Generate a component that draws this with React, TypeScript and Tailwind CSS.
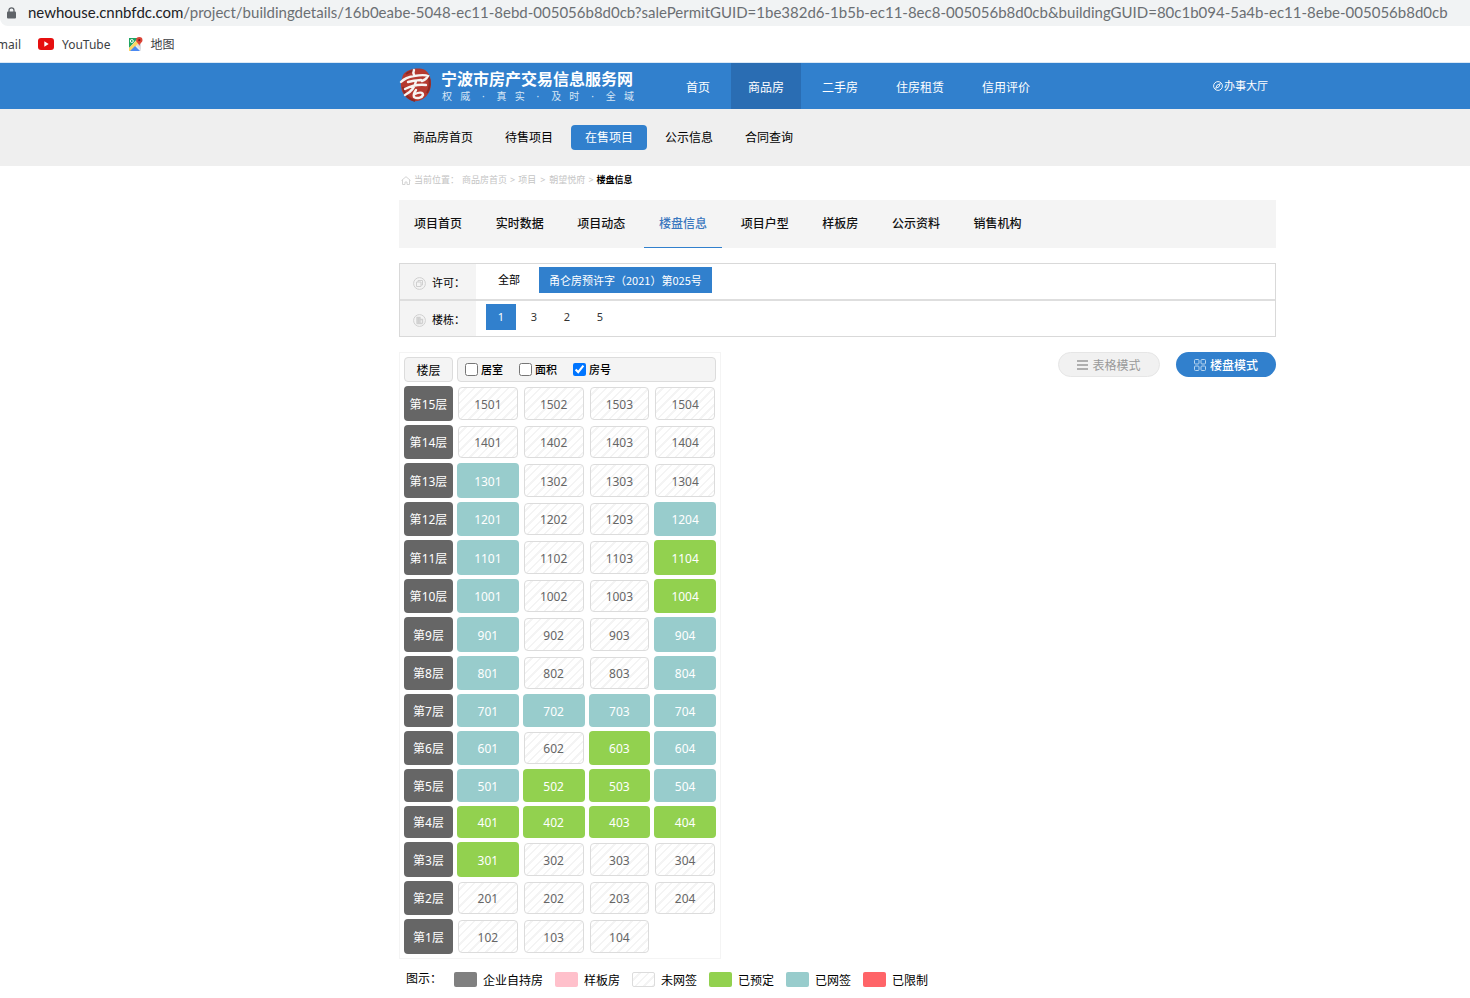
import React, { useState } from 'react';

type Status = 'open' | 'booked' | 'signed';

const shell = 'pl-[399px] pr-[194px]';
const hatch =
  'border border-[#dcdcdc] bg-[repeating-linear-gradient(135deg,#ffffff_0px,#ffffff_4px,#f4f4f4_4px,#f4f4f4_6px)]';

const mainNav = ['首页', '商品房', '二手房', '住房租赁', '信用评价'];
const subNav = ['商品房首页', '待售项目', '在售项目', '公示信息', '合同查询'];
const tabs = ['项目首页', '实时数据', '项目动态', '楼盘信息', '项目户型', '样板房', '公示资料', '销售机构'];

const statusClass: Record<Status, string> = {
  open: `${hatch} text-[#666]`,
  booked: 'bg-[#92d14f] text-white',
  signed: 'bg-[#98cccc] text-white',
};

const o: Status = 'open';
const b: Status = 'booked';
const s: Status = 'signed';

const floors: { floor: number; height: string; rooms: Status[]; first?: number }[] = [
  { floor: 15, height: 'h-[35px]', rooms: [o, o, o, o] },
  { floor: 14, height: 'h-[34px]', rooms: [o, o, o, o] },
  { floor: 13, height: 'h-[35px]', rooms: [s, o, o, o] },
  { floor: 12, height: 'h-[34px]', rooms: [s, o, o, s] },
  { floor: 11, height: 'h-[35px]', rooms: [s, o, o, b] },
  { floor: 10, height: 'h-[34px]', rooms: [s, o, o, b] },
  { floor: 9, height: 'h-[35px]', rooms: [s, o, o, s] },
  { floor: 8, height: 'h-[34px]', rooms: [s, o, o, s] },
  { floor: 7, height: 'h-[33px]', rooms: [s, s, s, s] },
  { floor: 6, height: 'h-[34px]', rooms: [s, o, b, s] },
  { floor: 5, height: 'h-[33px]', rooms: [s, b, b, s] },
  { floor: 4, height: 'h-[32px]', rooms: [b, b, b, b] },
  { floor: 3, height: 'h-[35px]', rooms: [b, o, o, o] },
  { floor: 2, height: 'h-[34px]', rooms: [o, o, o, o] },
  { floor: 1, height: 'h-[35px]', rooms: [o, o, o], first: 2 },
];

const legend = [
  { name: '企业自持房', swatch: 'bg-[#808080]' },
  { name: '样板房', swatch: 'bg-[#ffc0cb]' },
  { name: '未网签', swatch: hatch },
  { name: '已预定', swatch: 'bg-[#92d14f]' },
  { name: '已网签', swatch: 'bg-[#98cccc]' },
  { name: '已限制', swatch: 'bg-[#ff6468]' },
];

function Seal() {
  return (
    <svg width="34" height="36" viewBox="0 0 34 36" fill="none" aria-hidden="true">
      <path d="M4 8C8 2 19 0 26 3c6 4 7 13 5 20-3 8-10 12-17 11C6 32 1 24 2 15Z" fill="#b5392f" />
      <path d="M4 20c1 7 6 12 12 14M29 9c3 5 2 12-1 17M7 7c3-2 5-3 7-3" stroke="#8d2a26" strokeWidth="2" />
      <path
        d="M15 3c-1 2-1 3 0 5M2 15c3-3 7-5 13-6 6-1 12-1 14 0-1 2-3 4-6 5M9 15c5-1 9-2 13-2M6 22c6-3 13-5 21-4M17 14c-1 6-5 11-11 14M17 23c-2 3-3 5-2 7 3 2 8 1 9-2 0-3-4-3-8-1"
        stroke="#f7f4f2"
        strokeWidth="2.4"
        strokeLinecap="round"
      />
    </svg>
  );
}

function MapsIcon() {
  return (
    <svg width="15" height="15" viewBox="0 0 15 15" aria-hidden="true">
      <path d="M1 1h12v13H1z" fill="#e8eaed" />
      <path d="M1 1h9L1 11z" fill="#1fa463" />
      <path d="M1 11 9 3l2 3-8 8H1z" fill="#fdd663" />
      <path d="m2 14 5-5 5 5z" fill="#4a89f3" />
      <path d="m8 8 5 5V7z" fill="#dadce0" />
      <circle cx="3.8" cy="4" r="1.5" fill="none" stroke="#fff" />
      <path d="M11.3 0a3.2 3.2 0 0 0-3.2 3.2c0 2.2 2.6 2.8 3.2 5.8.6-3 3.2-3.6 3.2-5.8A3.2 3.2 0 0 0 11.3 0z" fill="#dc4437" />
      <circle cx="11.3" cy="3.2" r="1.1" fill="#7b231c" />
    </svg>
  );
}

function FilterIcon({ kind }: { kind: 'permit' | 'building' }) {
  return (
    <svg width="13" height="13" viewBox="0 0 13 13" fill="none" stroke="#d0d0d0" aria-hidden="true">
      <circle cx="6.5" cy="6.5" r="5.9" />
      {kind === 'permit' ? (
        <path d="M3.5 5H8v4.500H3.500zM5 5V3.500h4.500V8H8" />
      ) : (
        <path d="M4 9.500v-6h3v6M7 5.500h2.500v4M3.500 9.500h6M5.500 4v5" strokeWidth="1.400" />
      )}
    </svg>
  );
}

export default function App() {
  const [fields, setFields] = useState<Record<string, boolean>>({ 居室: false, 面积: false, 房号: true });

  return (
    <div className="min-h-screen bg-white font-['Noto_Sans','Noto_Sans_CJK_SC',sans-serif] text-xs text-black">
      <div className="flex h-[26px] items-center gap-3 overflow-hidden rounded-bl-lg bg-[#f1f3f4] pl-[7px] whitespace-nowrap">
        <svg width="9" height="12" viewBox="0 0 9 12" className="shrink-0" aria-hidden="true">
          <path d="M2 5V3.300a2.500 2.500 0 0 1 5 0V5" fill="none" stroke="#5f6368" strokeWidth="1.300" />
          <rect y="4.500" width="9" height="7" rx="1" fill="#5f6368" />
        </svg>
        <div className="pb-0.5 font-['Lato',sans-serif] text-[15px] leading-6 text-[#6b6f73]">
          <span className="text-[#202124]">newhouse.cnnbfdc.com</span>
          /project/buildingdetails/16b0eabe-5048-ec11-8ebd-005056b8d0cb?salePermitGUID=1be382d6-1b5b-ec11-8ec8-005056b8d0cb&amp;buildingGUID=80c1b094-5a4b-ec11-8ebe-005056b8d0cb
        </div>
      </div>

      <div className="flex h-[37px] items-center overflow-hidden border-b border-[#dbe9f6] text-[#3c4043]">
        <a href="#mail" className="flex w-[21px] shrink-0 justify-end overflow-hidden pt-0.5">
          mail
        </a>
        <a href="#youtube" className="ml-[17px] flex items-center gap-2">
          <svg width="16" height="12" viewBox="0 0 16 12" aria-hidden="true">
            <rect width="16" height="12" rx="3" fill="#e60f0f" />
            <path d="m6.300 3.300 4.400 2.700-4.400 2.700z" fill="#fff" />
          </svg>
          <span className="pt-0.5">YouTube</span>
        </a>
        <a href="#maps" className="ml-[17px] flex items-center gap-2">
          <MapsIcon />
          <span className="pt-0.5">地图</span>
        </a>
      </div>

      <header className={`flex h-[46px] bg-[#3180cd] text-white ${shell}`}>
        <a href="#home" className="flex w-[270px] shrink-0 gap-2 pt-1">
          <Seal />
          <div className="w-[194px] pt-[3px]">
            <div className="text-base leading-[19px] font-bold whitespace-nowrap">宁波市房产交易信息服务网</div>
            <div className="flex justify-between px-px pt-px text-[10px] leading-3 text-[#d6e6f5]">
              {Array.from('权威·真实·及时·全域').map((c, i) => (
                <span key={i} className="w-2.5 text-center">{c}</span>
              ))}
            </div>
          </div>
        </a>
        <nav className="flex shrink-0 gap-1">
          {mainNav.map((n) => (
            <a
              key={n}
              href={`#${n}`}
              className={`flex items-center px-[17px] pt-1 ${n === '商品房' ? 'bg-[#2a6db3]' : ''}`}
            >
              {n}
            </a>
          ))}
        </nav>
        <a href="#hall" className="mr-2 ml-auto flex items-center gap-px text-[11px]">
          <svg width="10" height="10" viewBox="0 0 10 10" fill="none" stroke="#fff" strokeWidth="0.9" aria-hidden="true">
            <circle cx="5" cy="5" r="4.400" />
            <path d="m2.700 7.300 1.400-3.200 3.200-1.400-1.400 3.200z" />
          </svg>
          办事大厅
        </a>
      </header>

      <nav className={`flex h-[57px] items-center gap-1 bg-[#efefef] ${shell}`}>
        {subNav.map((n) => (
          <a
            key={n}
            href={`#${n}`}
            className={`rounded px-3.5 leading-[25px] ${n === '在售项目' ? 'bg-[#3180cd] text-white' : ''}`}
          >
            {n}
          </a>
        ))}
      </nav>

      <main className={shell}>
        <div className="flex h-[34px] items-center gap-[3px] pb-1.5 pl-0.5 text-[9px] text-[#c4c4c4]">
          <svg width="10" height="9" viewBox="0 0 10 9" fill="none" stroke="#d4d4d4" aria-hidden="true">
            <path d="M.5 4.500 5 .7l4.500 3.800M1.500 4v4.500H4V6h2v2.500h2.500V4" />
          </svg>
          <span>当前位置：</span>
          <a href="#a">商品房首页</a>
          <span>&gt;</span>
          <a href="#b">项目</a>
          <span className="px-px">&gt;</span>
          <a href="#c">朝望悦府</a>
          <span>&gt;</span>
          <span className="font-bold text-black">楼盘信息</span>
        </div>

        <nav className="h-12 bg-[#f4f4f4] text-sm leading-[47px] whitespace-nowrap">
          {tabs.map((t) => (
            <React.Fragment key={t}>
              <a
                href={`#${t}`}
                className={`inline-block h-12 px-[15px] align-top text-xs leading-[47px] font-medium ${
                  t === '楼盘信息' ? 'border-b border-[#3180cd] text-[#3c78bf]' : 'text-[#111]'
                }`}
              >
                {t}
              </a>{' '}
            </React.Fragment>
          ))}
        </nav>

        <section className="mt-[15px] border border-[#d9d9d9] text-[11px]">
          <div className="flex h-[37px] border-b-2 border-[#dedede]">
            <div className="flex w-[76px] items-center gap-1.5 bg-[#f4f4f4] pt-1 pl-[13px] whitespace-nowrap">
              <FilterIcon kind="permit" />
              许可：
            </div>
            <div className="flex gap-[7px] pt-[3px] pl-2.5">
              <button type="button" className="h-[26px] px-3">全部</button>
              <button
                type="button"
                className="h-[26px] bg-[#3180cd] px-2.5 font-['Noto_Sans_CJK_SC',sans-serif] text-white"
              >
                甬仑房预许字（2021）第025号
              </button>
            </div>
          </div>
          <div className="flex h-[35px]">
            <div className="flex w-[76px] items-center gap-1.5 bg-[#f4f4f4] pt-1 pl-[13px] whitespace-nowrap">
              <FilterIcon kind="building" />
              楼栋：
            </div>
            <div className="flex gap-[3px] pt-[3px] pl-2.5">
              {['1', '3', '2', '5'].map((n) => (
                <button
                  key={n}
                  type="button"
                  className={`h-[26px] w-[30px] ${n === '1' ? 'bg-[#3180cd] text-white' : 'text-[#333]'}`}
                >
                  {n}
                </button>
              ))}
            </div>
          </div>
        </section>

        <div className="mt-[15px] flex items-start justify-between">
          <table className="w-[322px] table-fixed border-separate border-spacing-1 border border-[#f4f4f4] text-center">
            <colgroup>
              <col className="w-[49px]" />
              <col />
              <col />
              <col />
              <col />
            </colgroup>
            <thead>
              <tr className="h-[25px]">
                <th className="rounded border border-[#dcdcdc] bg-[#f4f4f4] p-0 pt-0.5 font-normal">楼层</th>
                <th colSpan={4} className="rounded border border-[#dcdcdc] bg-[#f4f4f4] p-0 font-medium">
                  <div className="flex gap-4 pl-[7px] text-[11px] leading-[23px]">
                    {Object.keys(fields).map((f) => (
                      <label key={f} className="flex items-center gap-[3px]">
                        <input
                          type="checkbox"
                          checked={fields[f]}
                          onChange={(e) => setFields({ ...fields, [f]: e.target.checked })}
                          className="size-[13px]"
                        />
                        {f}
                      </label>
                    ))}
                  </div>
                </th>
              </tr>
            </thead>
            <tbody>
              {floors.map(({ floor, height, rooms, first = 1 }) => (
                <tr key={floor} className={height}>
                  <th className="rounded bg-[#666] p-0 pt-0.5 font-normal whitespace-nowrap text-white">第{floor}层</th>
                  {rooms.map((status, i) => (
                    <td key={i} className={`${height} ${status === 'open' ? 'p-px' : 'p-0'}`}>
                      <div className={`flex h-full items-center justify-center rounded pt-0.5 ${statusClass[status]}`}>
                        {floor * 100 + first + i}
                      </div>
                    </td>
                  ))}
                </tr>
              ))}
            </tbody>
          </table>

          <div className="flex gap-4">
            <button
              type="button"
              className="flex h-[25px] w-[102px] items-center justify-center gap-1 rounded-full border border-[#e6e6e6] bg-[#f1f1f1] text-[#999]"
            >
              <svg width="11" height="10" viewBox="0 0 11 10" stroke="#999" strokeWidth="1.6" aria-hidden="true">
                <path d="M0 1h11M0 5h11M0 9h11" />
              </svg>
              <span className="pt-[3px]">表格模式</span>
            </button>
            <button
              type="button"
              className="flex h-[25px] w-[100px] items-center justify-center gap-1 rounded-full bg-[#3180cd] font-medium text-white"
            >
              <svg width="12" height="12" viewBox="0 0 12 12" fill="none" stroke="#b9d6f0" aria-hidden="true">
                <rect x=".5" y=".5" width="4.500" height="4.500" rx="1" />
                <rect x="7" y=".5" width="4.500" height="4.500" rx="1" />
                <rect x=".5" y="7" width="4.500" height="4.500" rx="1" />
                <rect x="7" y="7" width="4.500" height="4.500" rx="1" />
              </svg>
              <span className="pt-[3px]">楼盘模式</span>
            </button>
          </div>
        </div>

        <div className="flex h-[39px] items-center gap-3 pl-[7px] whitespace-nowrap">
          <span className="w-9">图示：</span>
          {legend.map(({ name, swatch }) => (
            <span key={name} className="flex items-center gap-1.5 pt-0.5">
              <span className={`h-[15px] w-[23px] rounded-xs ${swatch}`} />
              <span className="pt-0.5">{name}</span>
            </span>
          ))}
        </div>
      </main>
    </div>
  );
}
